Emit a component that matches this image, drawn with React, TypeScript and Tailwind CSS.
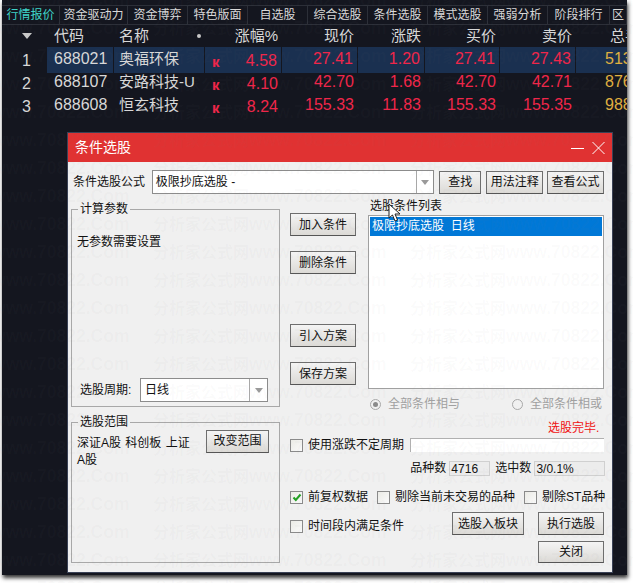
const FONT = "font-['Liberation_Sans','Noto_Sans_CJK_SC',sans-serif]";

const tabs: [string, string][] = [
  ["行情报价", "w-[58px] text-[#3fd4c8]"],
  ["资金驱动力", "w-[68px]"],
  ["资金博弈", "w-[60px]"],
  ["特色版面", "w-[60px]"],
  ["自选股", "w-[60px]"],
  ["综合选股", "w-[60px]"],
  ["条件选股", "w-[60px]"],
  ["模式选股", "w-[60px]"],
  ["强弱分析", "w-[60px]"],
  ["阶段排行", "w-[62px]"],
  ["区", "w-[17px]"],
];

const rows = [
  ["1", "688021", "奥福环保", "4.58", "27.41", "1.20", "27.41", "27.43", "513"],
  ["2", "688107", "安路科技-U", "4.10", "42.70", "1.68", "42.70", "42.71", "876"],
  ["3", "688608", "恒玄科技", "8.24", "155.33", "11.83", "155.33", "155.35", "988"],
];

const gridCols = "grid grid-cols-[45px_67px_91px_77px_76px_67px_75px_76px_51px]";
const selected = "bg-[#1a3050] border-r border-[#14161f]";

function Btn({ children, className = "" }: { children: React.ReactNode; className?: string }) {
  return (
    <div
      className={`flex items-center justify-center border border-[#6e6e6e] border-b-[#555] bg-gradient-to-b from-[#f4f4f4] to-[#dcdad6] text-[12px] text-[#111] ${className}`}
    >
      {children}
    </div>
  );
}

function Check({ checked = false, label, className = "" }: { checked?: boolean; label: string; className?: string }) {
  return (
    <div className={`flex items-center gap-[5px] text-[12px] leading-[14px] text-[#111] whitespace-nowrap ${className}`}>
      <div className="flex h-[13px] w-[13px] items-center justify-center border border-[#8a8a8a] bg-gradient-to-br from-[#ebebe6] to-[#fafafa]">
        {checked && (
          <svg width="10" height="9" viewBox="0 0 10 9">
            <path d="M1.5 4.5 L3.8 7 L8.5 1.5" fill="none" stroke="#22a022" strokeWidth="2" />
          </svg>
        )}
      </div>
      {label}
    </div>
  );
}

function Radio({ checked = false, label, className = "" }: { checked?: boolean; label: string; className?: string }) {
  return (
    <div className={`flex items-center gap-[7px] text-[12px] text-[#a0a0a0] whitespace-nowrap ${className}`}>
      <div className="flex h-[11px] w-[11px] items-center justify-center rounded-full border border-[#a8a8a8] bg-[#f0f0f0]">
        {checked && <div className="h-[5px] w-[5px] rounded-full bg-[#8a8a8a]" />}
      </div>
      {label}
    </div>
  );
}

function Arrow() {
  return (
    <svg width="8" height="5" viewBox="0 0 8 5">
      <path d="M0 0 H8 L4 5 Z" fill="#9a9a9a" />
    </svg>
  );
}

function Group({ title, className = "", children }: { title: string; className?: string; children: React.ReactNode }) {
  return (
    <div className={`relative border border-[#a8a8a8] ${className}`}>
      <span className="absolute left-[6px] top-[-9px] bg-[#f0f0f0] px-[2px] text-[12px] leading-[16px] text-[#111]">{title}</span>
      {children}
    </div>
  );
}

export default function App() {
  return (
    <div className={`relative h-[583px] w-[633px] overflow-hidden bg-white ${FONT}`}>
      <div className="relative ml-[2px] h-[575px] w-[625px] overflow-hidden bg-[#14161f] shadow-[1px_3px_4px_rgba(0,0,0,0.8)]">
        <div className="h-[5px]" />
        <div className="flex h-[20px] border-y border-[#2c2f38]">
          {tabs.map(([t, c]) => (
            <div
              key={t}
              className={`flex items-center justify-center border-r border-[#2c2f38] text-[12px] whitespace-nowrap ${c.includes("text-") ? "" : "text-[#d8d8d8]"} ${c}`}
            >
              {t}
            </div>
          ))}
        </div>

        <div className={`${gridCols} h-[22px] items-center text-[15px] text-[#d8d8d8]`}>
          <div className="flex justify-center pl-[4px]">
            <svg width="10" height="6" viewBox="0 0 10 6">
              <path d="M0 0 H10 L5 6 Z" fill="#c8c8c8" />
            </svg>
          </div>
          <div className="pl-[7px]">代码</div>
          <div className="flex items-center justify-between pl-[5px] pr-[4px]">
            名称
            <span className="h-[4px] w-[4px] rounded-full bg-[#c8c8c8]" />
          </div>
          <div className="pr-[4px] text-right">涨幅%</div>
          <div className="pr-[4px] text-right">现价</div>
          <div className="pr-[4px] text-right">涨跌</div>
          <div className="pr-[4px] text-right">买价</div>
          <div className="pr-[4px] text-right">卖价</div>
          <div className="overflow-hidden pl-[34px] whitespace-nowrap">总手</div>
        </div>

        {rows.map((r, i) => (
          <div key={r[0]} className={`${gridCols} h-[23px] items-center text-[16px] leading-[23px] text-[#f0264a]`}>
            <div className="pl-[4px] text-center text-[#d8d8d8]">{r[0]}</div>
            <div className={`h-full pl-[7px] text-[#d8d8d8] ${i === 0 ? selected : ""}`}>{r[1]}</div>
            <div className={`h-full pl-[5px] text-[15px] whitespace-nowrap text-[#d8d8d8] ${i === 0 ? selected : ""}`}>{r[2]}</div>
            <div className={`flex h-full items-center justify-between pl-[7px] pr-[4px] ${i === 0 ? selected : ""}`}>
              <span className="mt-[3px] text-[15px] font-bold">к</span>
              {r[3]}
            </div>
            {r.slice(4, 8).map((v, j) => (
              <div key={j} className={`h-full pr-[4px] text-right ${i === 0 ? selected : ""}`}>
                {v}
              </div>
            ))}
            <div className={`h-full overflow-hidden pl-[29px] text-[#e0b040] ${i === 0 ? "bg-[#1a3050]" : ""}`}>{r[8]}</div>
          </div>
        ))}
      </div>

      {/* dialog */}
      <div className="absolute left-[67px] top-[132px] h-[441px] w-[546px] border border-[#3a4256] bg-[#f0f0f0]">
        <div className="flex h-[29px] items-center justify-between bg-[#e03232] pl-[7px] pr-[7px] text-[14px] text-white">
          条件选股
          <div className="flex items-center gap-[8px]">
            <svg width="13" height="14" viewBox="0 0 13 14">
              <path d="M0 7.5 H13" stroke="#fff" strokeWidth="1" />
            </svg>
            <svg width="13" height="14" viewBox="0 0 13 14">
              <path d="M0.5 1 L12.5 13 M12.5 1 L0.5 13" stroke="#fff" strokeWidth="1" />
            </svg>
          </div>
        </div>

        <div className="pl-[3px] pr-[8px]">
          <div className="mt-[8px] flex h-[24px] items-center text-[12px] text-[#111]">
            <span className="w-[81px] pl-[2px]">条件选股公式</span>
            <div className="flex h-[24px] w-[283px] items-center border border-[#8c8c8c] bg-white">
              <span className="flex-1 pl-[3px]">极限抄底选股 -</span>
              <div className="flex h-full w-[17px] items-center justify-center border-l border-[#a8a8a8]">
                <Arrow />
              </div>
            </div>
            <Btn className="ml-[5px] h-[23px] w-[42px]">查找</Btn>
            <Btn className="ml-[5px] h-[23px] w-[57px]">用法注释</Btn>
            <Btn className="ml-[4px] h-[23px] w-[57px]">查看公式</Btn>
          </div>

          <div className="mt-[4px] flex">
            <div className="mt-[11px] w-[209px] shrink-0">
              <Group title="计算参数" className="flex h-[198px] flex-col justify-between pb-[4px]">
                <div className="mt-[24px] pl-[5px] text-[12px] leading-[16px] text-[#111]">无参数需要设置</div>
                <div className="flex items-center text-[12px] text-[#111]">
                  <span className="w-[68px] pl-[8px]">选股周期:</span>
                  <div className="flex h-[24px] w-[128px] items-center border border-[#8c8c8c] bg-white pl-[4px]">
                    <span className="flex-1">日线</span>
                    <div className="flex h-full w-[18px] items-center justify-center border-l border-[#a8a8a8]">
                      <Arrow />
                    </div>
                  </div>
                </div>
              </Group>
              <Group title="选股范围" className="mt-[15px] h-[141px]">
                <div className="flex pl-[5px] pt-[7px] text-[12px] leading-[17px] text-[#111]">
                  <div className="mt-[5px] w-[124px] whitespace-nowrap [word-spacing:1px]">
                    深证A股 科创板 上证
                    <br />
                    A股
                  </div>
                  <Btn className="ml-[5px] h-[23px] w-[63px]">改变范围</Btn>
                </div>
              </Group>
            </div>

            <div className="ml-[10px] flex-1">
              <div className="flex">
                <div className="w-[66px] shrink-0 pt-[15px]">
                  <Btn className="h-[23px]">加入条件</Btn>
                  <Btn className="mt-[15px] h-[23px]">删除条件</Btn>
                  <Btn className="mt-[50px] h-[23px]">引入方案</Btn>
                  <Btn className="mt-[15px] h-[23px]">保存方案</Btn>
                </div>
                <div className="ml-[12px] w-[236px]">
                  <div className="pl-[2px] text-[12px] leading-[17px] text-[#111]">选股条件列表</div>
                  <div className="h-[174px] border border-[#a0a0a0] bg-white p-[1px]">
                    <div className="h-[19px] bg-[#0078d7] pl-[2px] text-[12px] leading-[19px] text-white">极限抄底选股&nbsp;&nbsp;日线</div>
                  </div>
                </div>
              </div>

              <div className="mt-[6px] flex pl-[80px]">
                <Radio checked label="全部条件相与" />
                <Radio label="全部条件相或" className="ml-[52px]" />
              </div>
              <div className="mt-[7px] pr-[6px] text-right text-[12px] leading-[16px] text-[#f01010]">选股完毕.</div>
              <div className="mt-[2px] flex items-center">
                <Check label="使用涨跌不定周期" />
                <div className="ml-[6px] h-[14px] w-[194px] border-l border-t border-[#b0b0b0] bg-white" />
              </div>
              <div className="mt-[7px] flex items-center justify-end text-[12px] text-[#111]">
                品种数
                <div className="ml-[3px] h-[15px] w-[41px] border border-[#d0d0d0] bg-[#ececec] pl-[1px] leading-[14px]">4716</div>
                <span className="ml-[5px]">选中数</span>
                <div className="ml-[3px] h-[15px] w-[71px] border border-[#d0d0d0] bg-[#ececec] pl-[1px] leading-[14px]">3/0.1%</div>
              </div>
              <div className="mt-[13px] flex items-center">
                <Check checked label="前复权数据" />
                <Check label="剔除当前未交易的品种" className="ml-[9px]" />
                <Check label="剔除ST品种" className="ml-[9px]" />
              </div>
              <div className="mt-[8px] flex">
                <Check label="时间段内满足条件" className="mt-[7px] self-start" />
                <div className="ml-[48px] flex flex-col items-end">
                  <div className="flex gap-[14px]">
                    <Btn className="h-[23px] w-[72px]">选股入板块</Btn>
                    <Btn className="h-[23px] w-[66px]">执行选股</Btn>
                  </div>
                  <Btn className="mt-[6px] h-[22px] w-[66px]">关闭</Btn>
                </div>
              </div>
            </div>
          </div>
        </div>
      </div>

      {/* cursor */}
      <svg className="absolute left-[388px] top-[203px]" width="13" height="19" viewBox="0 0 13 19">
        <path d="M1 1 V15 L4.5 12 L7 18 L9.5 17 L7 11 H12 Z" fill="#fff" stroke="#222" strokeWidth="1" />
      </svg>

      {/* watermark */}
      <div className="pointer-events-none absolute inset-0 overflow-hidden pt-0 text-[16px] font-bold leading-[28px] text-[rgba(128,128,128,0.04)]">
        {Array.from({ length: 22 }).map((_, r) => (
          <div key={r} className="ml-[-104px] mt-0 flex h-[28px] w-[1100px] -translate-y-[14px] whitespace-nowrap">
            {Array.from({ length: 4 }).map((_, c) => (
              <span key={c} className="inline-block w-[257px] shrink-0">
                分析家公式网<span className="text-[17.5px]">www.70822.Com</span>
              </span>
            ))}
          </div>
        ))}
      </div>
    </div>
  );
}
